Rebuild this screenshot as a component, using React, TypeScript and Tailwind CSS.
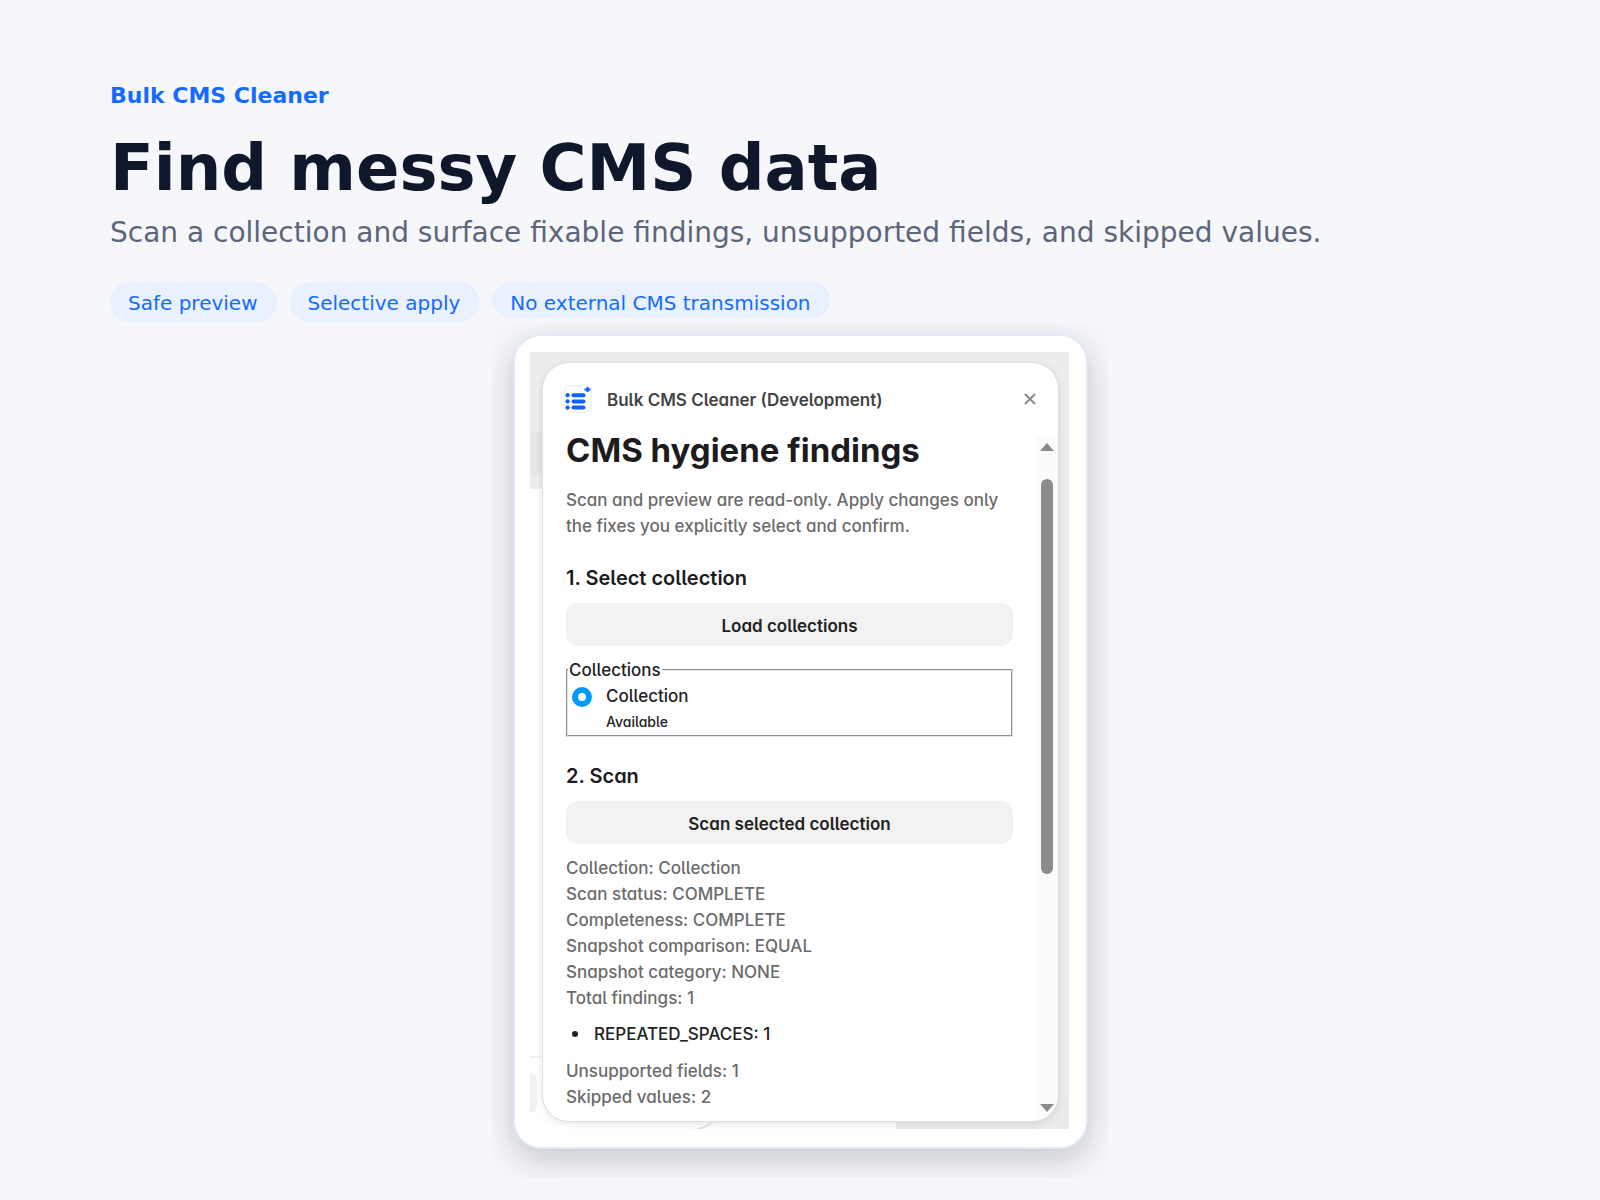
import React from "react";

const chips = [
  { label: "Safe preview", box: "h-10" },
  { label: "Selective apply", box: "h-10" },
  { label: "No external CMS transmission", box: "h-9" },
];

const summary = [
  "Collection: Collection",
  "Scan status: COMPLETE",
  "Completeness: COMPLETE",
  "Snapshot comparison: EQUAL",
  "Snapshot category: NONE",
  "Total findings: 1",
];

function AppLogo() {
  return (
    <svg viewBox="0 0 28 28" className="h-7 w-7 shrink-0" aria-hidden="true">
      <rect x="0.7" y="0.7" width="26.6" height="26.6" rx="6" fill="#fff" stroke="#f1f1f3" strokeWidth="1.4" />
      <g fill="#0f62fe">
        {[10.2, 16.4, 22.6].map((y) => (
          <g key={y}>
            <circle cx="3.6" cy={y} r="2.1" />
            <rect x="7.5" y={y - 2} width="14" height="4" rx="2" />
          </g>
        ))}
        <path d="M22.4 2h2.2v1.5h2v2h-2V7h-2.2V5.500h-2v-2h2z" />
      </g>
    </svg>
  );
}

function Backdrop() {
  return (
    <div className="absolute inset-0 overflow-hidden bg-white" aria-hidden="true">
      <div className="h-[137px] bg-[#ededed] pt-20">
        <div className="h-[43px] bg-[#e6e6e6]" />
      </div>
      <div className="absolute right-0 top-0 h-full w-8 bg-[#ededed]" />
      <div className="absolute bottom-0 right-0 h-8 w-[173px] bg-[#ebebeb]" />
      <div className="absolute bottom-[71px] left-0 h-0.5 w-8 bg-[#f0f0f0]" />
      <div className="absolute bottom-4 left-0 h-10 w-[7px] rounded-r-lg bg-[#f2f2f2]" />
      <div className="absolute -bottom-0.5 left-0 h-12 w-[193px] rounded-br-[32px] border-b-2 border-r-2 border-[#e4e4e4]" />
    </div>
  );
}

function ActionButton({ children }: { children: React.ReactNode }) {
  return (
    <button type="button" className="h-[43px] w-full rounded-xl bg-[#f2f2f2] pt-0.5 text-[17px] font-semibold text-[#222]">
      {children}
    </button>
  );
}

function Scrollbar() {
  return (
    <div className="flex w-[22px] shrink-0 flex-col items-center bg-[#fbfbfb] pb-[9px] pt-2" aria-hidden="true">
      <svg viewBox="0 0 14 8" className="h-2 w-3.5">
        <path d="M7 0l7 8H0z" fill="#8b8b8b" />
      </svg>
      <div className="mt-7 h-[395px] w-3 rounded-full bg-[#8b8b8b]" />
      <svg viewBox="0 0 14 8" className="mt-auto h-2 w-3.5">
        <path d="M7 8L0 0h14z" fill="#8b8b8b" />
      </svg>
    </div>
  );
}

function Panel() {
  return (
    <section className="relative overflow-hidden rounded-[26px] bg-white font-[Inter,sans-serif] text-[17px] font-medium leading-[26px] text-[#222] shadow-[0_0_0_1px_#e0e0e0,0_2px_8px_rgba(0,0,0,0.12)] [font-feature-settings:'cv11','cv05','cv09','ss03']">
      <header className="flex h-[72px] items-center pl-[21px] pr-[21px]">
        <AppLogo />
        <span className="ml-[15px] pt-0.5 font-semibold text-[#444]">Bulk CMS Cleaner (Development)</span>
        <button type="button" aria-label="Close" className="ml-auto text-[#8b8b8b]">
          <svg viewBox="0 0 14 14" className="h-3.5 w-3.5">
            <path d="M2 2l10 10M12 2L2 12" stroke="currentColor" strokeWidth="2" fill="none" />
          </svg>
        </button>
      </header>
      <div className="flex">
        <div className="flex-1 pb-[11px] pl-[23px] pr-[23px]">
          <h2 className="h-10 text-[33px] font-bold leading-[30px] text-[#1c1c1e]">CMS hygiene findings</h2>
          <p className="mt-3 text-[#6b6b6b]">
            Scan and preview are read-only. Apply changes only the fixes you explicitly select and confirm.
          </p>
          <h3 className="mb-3 mt-[26px] text-xl font-semibold leading-[26px] text-[#1c1c1e]">1. Select collection</h3>
          <ActionButton>Load collections</ActionButton>
          <fieldset className="mt-[11px] border-2 border-[#e3e3e3] pl-1 [border-style:groove]">
            <legend className="-ml-1 px-px">Collections</legend>
            <label className="flex items-start">
              <input
                type="radio"
                name="collection"
                defaultChecked
                className="mt-1 h-5 w-5 appearance-none rounded-full border-[6px] border-[#0099ff] bg-white"
              />
              <span className="ml-3.5 flex flex-col">
                <span>Collection</span>
                <span className="text-sm leading-[26px]">Available</span>
              </span>
            </label>
          </fieldset>
          <h3 className="mb-3 mt-[26px] text-xl font-semibold leading-[26px] text-[#1c1c1e]">2. Scan</h3>
          <ActionButton>Scan selected collection</ActionButton>
          <div className="mt-[11px] text-[#6b6b6b]">
            {summary.map((line) => (
              <p key={line}>{line}</p>
            ))}
          </div>
          <ul className="mb-[11px] mt-2.5">
            <li className="flex items-center gap-4 before:ml-1.5 before:h-1.5 before:w-1.5 before:rounded-full before:bg-[#222]">
              REPEATED_SPACES: 1
            </li>
          </ul>
          <div className="text-[#6b6b6b]">
            <p>Unsupported fields: 1</p>
            <p>Skipped values: 2</p>
          </div>
        </div>
        <Scrollbar />
      </div>
    </section>
  );
}

export default function App() {
  return (
    <main className="min-h-screen bg-[#f6f7fb] px-[110px] pb-[22px] pt-20 font-['DejaVu_Sans',sans-serif]">
      <p className="text-[22px] font-bold leading-8 text-[#166bff]">Bulk CMS Cleaner</p>
      <h1 className="mt-3.5 text-[64px] font-bold leading-[84px] text-[#0f172a]">Find messy CMS data</h1>
      <p className="text-[28px] leading-[46px] text-[#5b667a]">
        Scan a collection and surface fixable findings, unsupported fields, and skipped values.
      </p>
      <ul className="mt-[26px] flex h-10 flex-wrap gap-[13px]">
        {chips.map((chip) => (
          <li key={chip.label} className={`${chip.box} rounded-[20px] bg-[#e9f1ff] pl-[18px] pr-[19px] text-xl leading-[42px] text-[#166bff]`}>
            {chip.label}
          </li>
        ))}
      </ul>
      <div className="mx-auto mt-0.5 max-w-[616px] overflow-hidden pb-[29px] pl-[21px] pr-5 pt-2.5">
        <div className="rounded-[28px] border-2 border-[#e2e8f4] bg-white pb-[18px] pl-[15px] pr-[17px] pt-4 shadow-[0_10px_34px_rgba(15,23,42,0.22)]">
          <div className="relative pb-2 pl-[13px] pr-[11px] pt-[11px]">
            <Backdrop />
            <Panel />
          </div>
        </div>
      </div>
    </main>
  );
}
